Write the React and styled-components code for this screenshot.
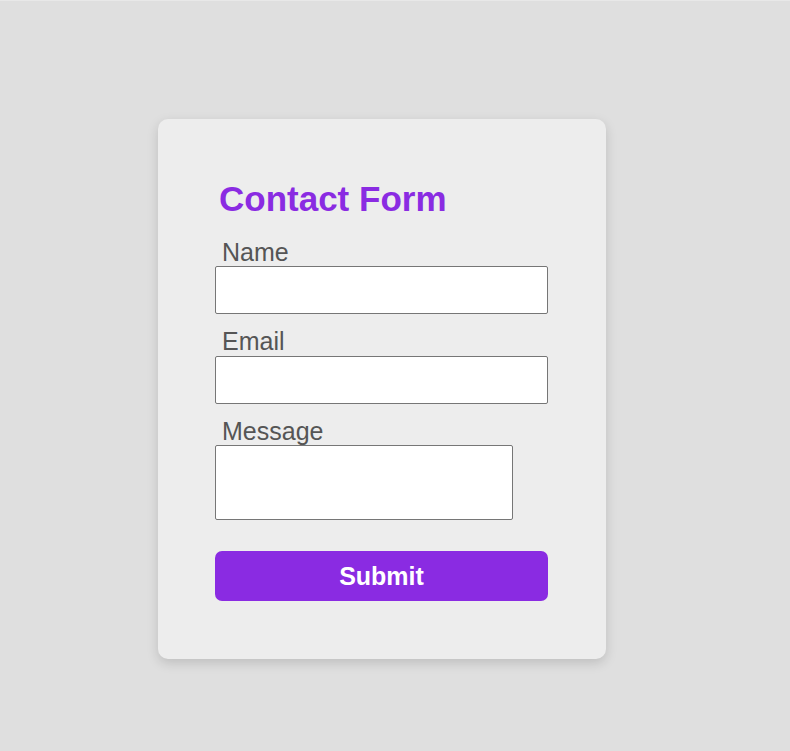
import styled, { createGlobalStyle } from "styled-components";

const GlobalStyle = createGlobalStyle`
  html, body {
    margin: 0;
    padding: 0;
    background: #dfdfdf;
  }
  body {
    font-family: "Liberation Sans", Arial, sans-serif;
  }
`;

const Page = styled.div`
  min-height: 751px;
  box-sizing: border-box;
  border-top: 1px solid #e8e8e8;
  padding: 118px 0 0 158px;
`;

const Card = styled.form`
  width: 448px;
  box-sizing: border-box;
  padding: 60px 57px 58px 57px;
  background: #ededed;
  border-radius: 10px;
  box-shadow: 0 4px 12px rgba(0, 0, 0, 0.15);
  display: flex;
  flex-direction: column;
`;

const Title = styled.h2`
  margin: 0 0 19.5px 4px;
  font-size: 35px;
  font-weight: bold;
  color: #8a2be2;
`;

const Field = styled.div`
  display: flex;
  flex-direction: column;
  margin-bottom: ${(p) => (p.last ? "31px" : "14px")};
`;

const Label = styled.label`
  font-size: 25px;
  color: #555;
  padding-left: 7px;
  line-height: 27.5px;
`;

const Input = styled.input`
  width: 333px;
  height: 48px;
  box-sizing: border-box;
  border: 1px solid #767676;
  border-radius: 2px;
  background: #fff;
  margin: 0;
`;

const TextArea = styled.textarea`
  width: 298px;
  height: 75px;
  box-sizing: border-box;
  border: 1px solid #767676;
  border-radius: 2px;
  background: #fff;
  margin: 0;
  resize: none;
  display: block;
`;

const Button = styled.button`
  width: 333px;
  height: 50px;
  border: none;
  border-radius: 7px;
  background: #8a2be2;
  color: #fff;
  font-family: "Liberation Sans", Arial, sans-serif;
  font-size: 25px;
  font-weight: bold;
  cursor: pointer;
`;

export default function App() {
  return (
    <>
      <GlobalStyle />
      <Page>
        <Card onSubmit={(e) => e.preventDefault()}>
          <Title>Contact Form</Title>
          <Field>
            <Label htmlFor="name">Name</Label>
            <Input id="name" type="text" />
          </Field>
          <Field>
            <Label htmlFor="email">Email</Label>
            <Input id="email" type="email" />
          </Field>
          <Field last>
            <Label htmlFor="message">Message</Label>
            <TextArea id="message" />
          </Field>
          <Button type="submit">Submit</Button>
        </Card>
      </Page>
    </>
  );
}
